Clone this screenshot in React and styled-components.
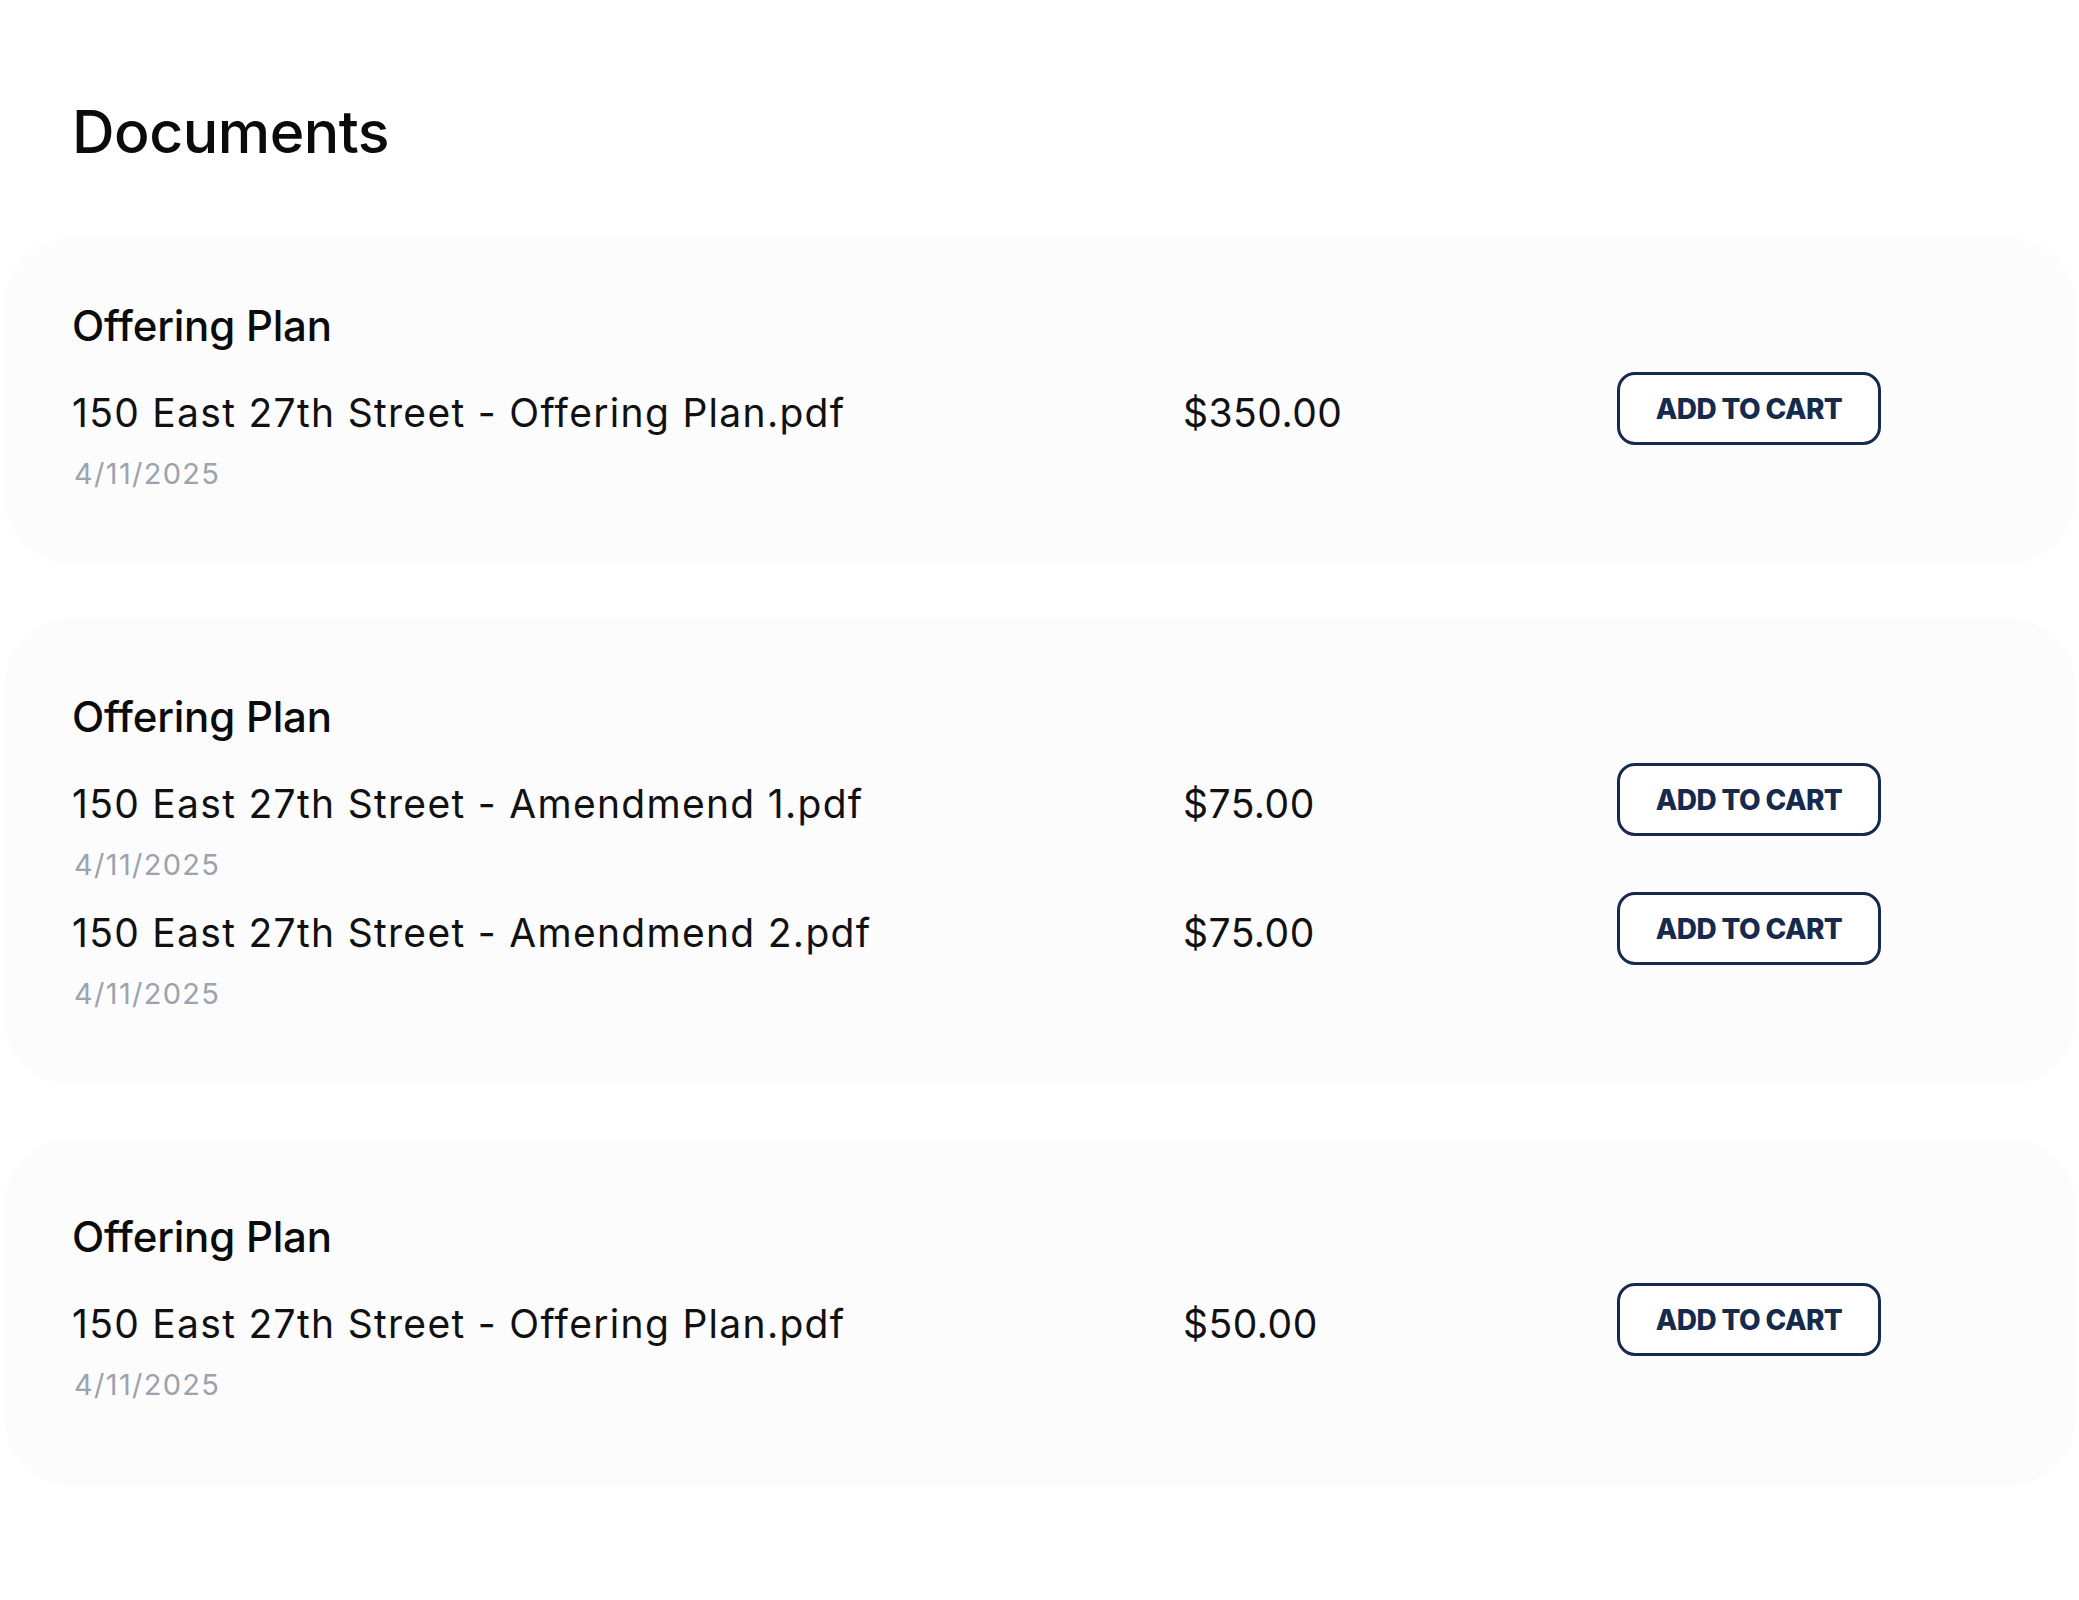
import styled, { createGlobalStyle } from "styled-components"

const GlobalStyle = createGlobalStyle`
  body {
    margin: 0;
    background: #ffffff;
    font-family: Inter, "Noto Sans", "Liberation Sans", sans-serif;
    color: #0d0d0d;
  }
`

const Page = styled.main`
  padding: 96px 3px 80px 4px;
`

const Heading = styled.h1`
  margin: 0 0 69px 68px;
  font-size: 59px;
  line-height: 72px;
  font-weight: 500;
  letter-spacing: -0.5px;
  color: #0b0b0b;
`

const CardList = styled.div`
  display: flex;
  flex-direction: column;
  gap: 54px;
`

const Card = styled.section`
  background: #fcfcfd;
  border-radius: 68px;
  padding: ${(p) => p.$top}px 40px ${(p) => p.$bottom}px 68px;
`

const CardTitle = styled.h2`
  margin: 0 0 20px;
  font-size: 42px;
  line-height: 52px;
  font-weight: 500;
  letter-spacing: -0.2px;
  color: #0b0b0b;
`

const Items = styled.div`
  display: flex;
  flex-direction: column;
  gap: 8px;
`

const Item = styled.div`
  display: grid;
  grid-template-columns: 1111px 434px 264px;
  grid-template-rows: auto auto;
  row-gap: 10px;
  align-items: center;
`

const FileName = styled.span`
  margin-top: 8px;
  font-size: 39px;
  line-height: 52px;
  letter-spacing: 1.3px;
  color: #111;
`

const Price = styled.span`
  margin-top: 8px;
  font-size: 39px;
  line-height: 52px;
  letter-spacing: 0.5px;
  color: #111;
`

const DateText = styled.span`
  grid-column: 1;
  padding-left: 2px;
  font-size: 29px;
  line-height: 38px;
  letter-spacing: 1.3px;
  color: #9ba3ad;
`

const CartButton = styled.button`
  width: 264px;
  height: 73px;
  box-sizing: border-box;
  border: 3px solid #152a4c;
  border-radius: 18px;
  background: #ffffff;
  color: #152a4c;
  font-family: Inter, "Noto Sans", sans-serif;
  font-size: 28px;
  font-weight: 800;
  letter-spacing: -0.6px;
  cursor: pointer;
`

const sections = [
  {
    title: "Offering Plan",
    top: 63,
    bottom: 71,
    docs: [{ name: "150 East 27th Street - Offering Plan.pdf", price: "$350.00", date: "4/11/2025" }],
  },
  {
    title: "Offering Plan",
    top: 73,
    bottom: 72,
    docs: [
      { name: "150 East 27th Street - Amendmend 1.pdf", price: "$75.00", date: "4/11/2025" },
      { name: "150 East 27th Street - Amendmend 2.pdf", price: "$75.00", date: "4/11/2025" },
    ],
  },
  {
    title: "Offering Plan",
    top: 72,
    bottom: 82,
    docs: [{ name: "150 East 27th Street - Offering Plan.pdf", price: "$50.00", date: "4/11/2025" }],
  },
]

const App = () => {
  return (
    <>
      <GlobalStyle />
      <Page>
        <Heading>Documents</Heading>
        <CardList>
          {sections.map((s, i) => (
            <Card key={i} $top={s.top} $bottom={s.bottom}>
              <CardTitle>{s.title}</CardTitle>
              <Items>
                {s.docs.map((d) => (
                  <Item key={d.name}>
                    <FileName>{d.name}</FileName>
                    <Price>{d.price}</Price>
                    <CartButton>ADD TO CART</CartButton>
                    <DateText>{d.date}</DateText>
                  </Item>
                ))}
              </Items>
            </Card>
          ))}
        </CardList>
      </Page>
    </>
  )
}

export default App
